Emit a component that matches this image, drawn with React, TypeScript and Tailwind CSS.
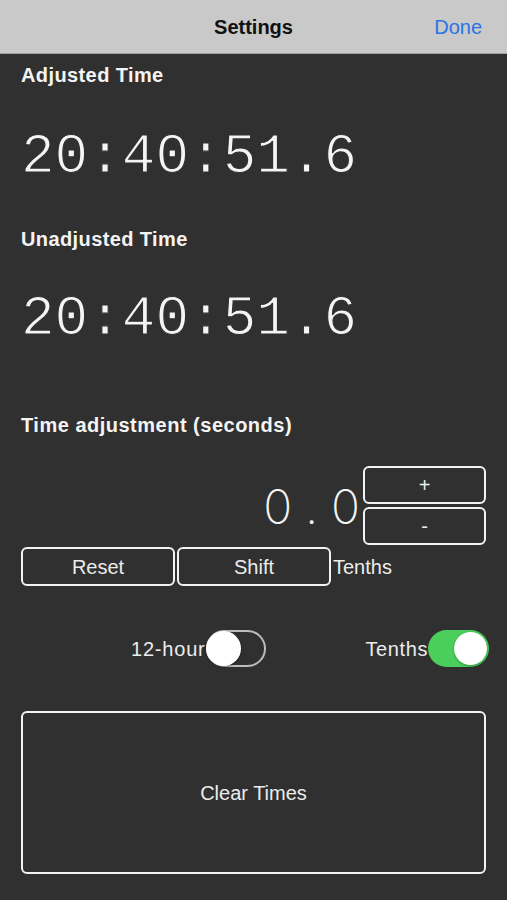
import React from "react";

const sans = "font-['Liberation_Sans',Arial,sans-serif]";
const mono = "font-['Liberation_Mono','Courier_New',monospace]";

function Toggle({ on }: { on: boolean }) {
	return on ? (
		<div className="relative h-[37px] w-[61px] rounded-full bg-[#4bcf5c]">
			<div className="absolute right-[2px] top-[2px] h-[33px] w-[33px] rounded-full bg-white shadow-[0_1px_3px_rgba(0,0,0,0.3)]" />
		</div>
	) : (
		<div className="relative h-[37px] w-[60px] rounded-full border-2 border-[#bdbdbd]">
			<div className="absolute left-[-2px] top-[-1px] h-[35px] w-[35px] rounded-full bg-white shadow-[0_1px_3px_rgba(0,0,0,0.4)]" />
		</div>
	);
}

function OutlineButton({
	label,
	className,
}: {
	label: string;
	className: string;
}) {
	return (
		<button
			className={`flex items-center justify-center rounded-[6px] border-2 border-[#f2f2f2] text-[20px] text-[#ececec] ${className}`}
		>
			{label}
		</button>
	);
}

// thin clock digits, courier style
const clock = `h-[64px] text-[56px] leading-[64px] [-webkit-text-stroke:1.2px_#303030] ${mono}`;

export default function App() {
	return (
		<div className={`h-[900px] w-[507px] overflow-hidden bg-[#303030] ${sans}`}>
			{/* nav bar */}
			<div className="relative flex h-[54px] items-center justify-center border-b border-[#9e9e9e] bg-[#c9c9c9]">
				<span className="text-[20px] font-bold text-[#111]">Settings</span>
				<span className="absolute right-[25px] text-[20px] text-[#2874e6]">
					Done
				</span>
			</div>

			<div className="px-[21px] text-[#f4f4f4]">
				<p className="mt-[10px] h-[22px] text-[20px] font-bold leading-[22px] tracking-[0.4px]">
					Adjusted Time
				</p>
				<p className={`mt-[39px] ${clock}`}>20:40:51.6</p>

				<p className="mt-[39px] h-[22px] text-[20px] font-bold leading-[22px] tracking-[0.4px]">
					Unadjusted Time
				</p>
				<p className={`mt-[37px] ${clock}`}>20:40:51.6</p>

				<p className="mt-[63px] h-[22px] text-[20px] font-bold leading-[22px] tracking-[0.5px]">
					Time adjustment (seconds)
				</p>

				{/* adjustment value + stepper */}
				<div className="mt-[30px] flex h-[79px] items-center justify-end">
					<span className="mr-[-11px] pt-[2px] font-['Inter',sans-serif] text-[48px] font-extralight leading-none tracking-[14px] text-[#f4f4f4]">
						0.0
					</span>
					<div className="flex w-[123px] flex-col gap-[3px]">
						<OutlineButton label="+" className="h-[38px] w-[123px] text-[17px]" />
						<OutlineButton label="-" className="h-[38px] w-[123px] text-[17px]" />
					</div>
				</div>

				<div className="mt-[2px] flex h-[39px] items-center gap-[2px]">
					<OutlineButton label="Reset" className="h-[39px] w-[154px]" />
					<OutlineButton label="Shift" className="h-[39px] w-[154px]" />
					<span className="text-[20px] text-[#ececec]">Tenths</span>
				</div>

				{/* switches */}
				<div className="mt-[44px] flex h-[37px] items-center">
					<div className="ml-[110px] flex items-center">
						<span className="text-[20px] tracking-[0.8px] text-[#ececec]">
							12-hour
						</span>
						<Toggle on={false} />
					</div>
					<div className="ml-auto mr-[-3px] flex items-center">
						<span className="text-[20px] tracking-[0.6px] text-[#ececec]">
							Tenths
						</span>
						<Toggle on />
					</div>
				</div>

				<button className="mt-[44px] flex h-[163px] w-full items-center justify-center rounded-[6px] border-2 border-[#f2f2f2] text-[20px] text-[#ececec]">
					Clear Times
				</button>
			</div>
		</div>
	);
}
